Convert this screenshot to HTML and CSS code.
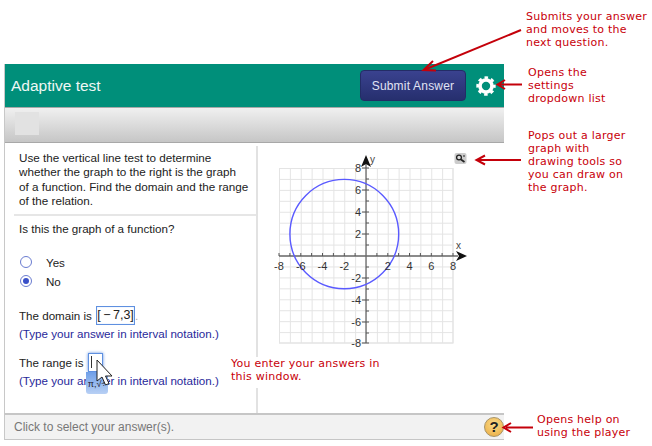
FILE: index.html
```html
<!DOCTYPE html>
<html lang="en">
<head>
<meta charset="utf-8">
<title>Adaptive test</title>
<link rel="stylesheet" href="styles.css">
</head>
<body>
<div class="page">
  <main class="player">
    <header class="topbar">
      <h1 class="title">Adaptive test</h1>
      <button class="submit">Submit Answer</button>
      <svg class="gear" width="20" height="20" viewBox="0 0 20 20">
        <circle cx="10" cy="10" r="6" fill="none" stroke="#fff" stroke-width="3.6"/>
        <circle cx="10" cy="10" r="8.2" fill="none" stroke="#fff" stroke-width="3" stroke-dasharray="3.44 3" stroke-dashoffset="1.7"/>
      </svg>
    </header>
    <div class="toolbar"><span class="toolbar-blank"></span></div>
    <section class="content">
      <div class="question">
        <p class="prompt">Use the vertical line test to determine<br>whether the graph to the right is the graph<br>of a function. Find the domain and the range<br>of the relation.</p>
        <div class="answers">
          <p class="ask">Is this the graph of a function?</p>
          <div class="options">
            <div class="option"><span class="radio"></span>Yes</div>
            <div class="option"><span class="radio checked"></span>No</div>
          </div>
          <div class="field first">
            <p class="field-line">The domain is <span class="box">[&#8201;&#8722;&#8201;7,3]</span><span class="dot">.</span></p>
            <p class="hint">(Type your answer in interval notation.)</p>
          </div>
          <div class="field">
            <p class="field-line">The range is <span class="box active"><i class="caret"></i></span></p>
            <p class="hint">(Type your answer in interval notation.)</p>
          </div>
        </div>
      </div>
      <div class="graph-pane">
        <svg class="graph" width="246" height="264" viewBox="258 146 246 264">
          <defs>
            <pattern id="cells" x="279" y="168" width="10.875" height="10.94" patternUnits="userSpaceOnUse">
              <path d="M0 0H10.875M0 0V10.94" fill="none" stroke="#e4e4e4" stroke-width="2"/>
            </pattern>
          </defs>
          <rect x="279" y="168" width="174" height="175" fill="url(#cells)"/>
          <path d="M279 343H453.5M453 168V343" fill="none" stroke="#e4e4e4" stroke-width="1.5"/>
          <path d="M279 256H458M366 343V160" fill="none" stroke="#6a6a6a" stroke-width="1.3"/>
          <path d="M279 253V256M289.9 253V256M300.8 253V256M311.6 253V256M322.5 253V256M333.4 253V256M344.3 253V256M355.1 253V256M376.9 253V256M387.8 253V256M398.6 253V256M409.5 253V256M420.4 253V256M431.3 253V256M442.1 253V256M453 253V256" stroke="#555" fill="none"/>
          <path d="M366 168H369M366 179H369M366 190H369M366 201H369M366 212H369M366 223H369M366 234H369M366 245H369M366 267H369M366 278H369M366 289H369M366 300H369M366 311H369M366 322H369M366 333H369M366 343H369" stroke="#555" fill="none"/>
          <path d="M362 168H366M362 190H366M362 212H366M362 234H366M362 278H366M362 300H366M362 322H366M362 343H366" stroke="#555" fill="none"/>
          <path d="M366 155L361 167L366 164L371 167Z" fill="#111"/>
          <path d="M467 256L456 251L459 256L456 261Z" fill="#111"/>
          <ellipse cx="344.3" cy="234.1" rx="54.4" ry="54.7" fill="none" stroke="#5a5aff" stroke-width="1.4"/>
          <g class="axis-num">
            <text x="279" y="270">-8</text><text x="300.8" y="270">-6</text><text x="322.5" y="270">-4</text><text x="344.3" y="270">-2</text>
            <text x="387.8" y="270">2</text><text x="409.5" y="270">4</text><text x="431.3" y="270">6</text><text x="453" y="270">8</text>
          </g>
          <g class="axis-num end">
            <text x="361" y="172">8</text><text x="361" y="194">6</text><text x="361" y="216">4</text><text x="361" y="238">2</text>
            <text x="361" y="282">-2</text><text x="361" y="304">-4</text><text x="361" y="326">-6</text><text x="361" y="347">-8</text>
          </g>
          <text class="axis-letter" x="370" y="163">y</text>
          <text class="axis-letter" x="456" y="249">x</text>
          <rect x="454.5" y="153" width="12" height="11" rx="2" fill="#ccc"/>
          <circle cx="459" cy="157.5" r="2.4" fill="#ddd" stroke="#222" stroke-width="1.3"/>
          <path d="M461 159.5L464.5 162" stroke="#222" stroke-width="1.7"/>
          <path d="M463 156H465" stroke="#222"/>
        </svg>
      </div>
    </section>
    <footer class="statusbar">
      <span class="status">Click to select your answer(s).</span>
      <span class="help">?</span>
    </footer>
  </main>

  <div class="palette">&#960;,&#8730;&#247;</div>
  <svg class="overlay" width="652" height="446" viewBox="0 0 652 446">
    <path d="M97 360V381L102 377L105.500 385L109 383.500L105.500 376L112 376Z" fill="#fff" stroke="#222"/>
    <g fill="none" stroke="#c4000a" stroke-width="2">
      <path d="M521 30L425 69.500"/>
      <path d="M433 61L423.500 70L436 70.500"/>
      <path d="M522 84.500H498M505 80L497.500 84.500L505 89"/>
      <path d="M521 160H478M485 155.500L476.500 160L485 164.500"/>
      <path d="M533 427.500H506M511 423L503.500 427.500L511 432"/>
    </g>
  </svg>
  <p class="note note-submit">Submits your answer<br>and moves to the<br>next question.</p>
  <p class="note note-gear">Opens the<br>settings<br>dropdown list</p>
  <p class="note note-graph">Pops out a larger<br>graph with<br>drawing tools so<br>you can draw on<br>the graph.</p>
  <p class="note note-enter">You enter your answers in<br>this window.</p>
  <p class="note note-help">Opens help on<br>using the player</p>
</div>
</body>
</html>
```
FILE: styles.css
```css
* { box-sizing: border-box; }
html, body { margin: 0; padding: 0; background: #fff; }
body { font-family: "Liberation Sans", Arial, sans-serif; color: #222; overflow: hidden; }
p, h1 { margin: 0; }

.page { position: relative; width: 652px; height: 446px; padding: 64px 0 0 4px; }

.player { width: 500px; height: 376px; border-left: 1px solid #c8c8c8; display: flex; flex-direction: column; }

.topbar { height: 43px; background: #008f7a; display: flex; align-items: center; padding: 0 8px 0 6px; flex: none; }
.title { font-size: 15.500px; font-weight: normal; color: #eef7f5; flex: 1; }
.submit { width: 106px; height: 31px; border: 1px solid #232c66; border-radius: 4px; background: linear-gradient(#3a428f, #262f6e); color: #e0e3f5; font: 12px "Liberation Sans", Arial, sans-serif; letter-spacing: .2px; padding: 0; }
.gear { margin-left: 10px; flex: none; }

.toolbar { height: 36px; flex: none; background: linear-gradient(#f0f0f0, #c6c6c6); border-top: 1px solid #a8a8a8; border-bottom: 1px solid #a8a8a8; padding: 4px 0 0 10px; }
.toolbar-blank { display: block; width: 24px; height: 23px; background: #e2e2e2; }

.content { flex: 1; display: flex; min-height: 0; padding-top: 3px; }
.question { width: 253px; flex: none; border-right: 2px solid #e2e2e2; display: flex; flex-direction: column; }
.prompt { font-size: 11.700px; line-height: 14.300px; padding: 5px 0 0 14px; height: 68px; color: #222; white-space: nowrap; }
.answers { margin-left: 9px; border-top: 2px solid #e6e6e6; padding: 6px 0 0 5px; font-size: 11.600px; }
.ask { line-height: 14px; }
.options { margin-top: 19px; display: flex; flex-direction: column; gap: 5px; }
.option { display: flex; align-items: center; height: 14px; gap: 14px; }
.radio { width: 12px; height: 12px; border-radius: 50%; border: 1px solid #6a7cd0; background: #fff; position: relative; margin-left: 1px; }
.radio.checked::after { content: ""; position: absolute; inset: 2px; border-radius: 50%; background: #3a50c8; }
.field { margin-top: 12px; }
.field.first { margin-top: 18px; }
.field-line { display: flex; align-items: center; height: 19px; white-space: pre; }
.box { display: block; width: 39px; height: 19px; line-height: 17px; text-align: center; border: 1px solid #5f90e0; box-shadow: inset 0 0 1px #8fb4ee; margin-left: 1px; font-size: 12.500px; }
.box.active { width: 15px; margin-left: 1px; box-shadow: 0 0 3px #5f8fe0; position: relative; }
.caret { position: absolute; left: 2px; top: 2px; width: 1px; height: 12px; background: #333; }
.dot { color: #aaa; }
.hint { color: #28289a; line-height: 14px; margin-top: 2px; }

.graph-pane { flex: 1; min-width: 0; }
.graph { display: block; }
.axis-num text { font: 11px "Liberation Sans", Arial, sans-serif; fill: #333; text-anchor: middle; }
.axis-num.end text { text-anchor: end; }
.axis-letter { font: 10px "Liberation Sans", Arial, sans-serif; fill: #444; }

.statusbar { height: 27px; flex: none; background: #f2f2f2; border-top: 2px solid #c6c6c6; border-bottom: 1px solid #c6c6c6; display: flex; align-items: center; padding-left: 9px; }
.status { flex: 1; color: #777; font-size: 12px; }
.help { width: 20px; height: 20px; margin-right: 0; border-radius: 50%; background: radial-gradient(circle at 50% 35%, #fbdc8a, #e9a93e); border: 1px solid #a89468; text-align: center; font: bold 15px/18px "Liberation Sans", Arial, sans-serif; color: #222; }

.overlay { position: absolute; left: 0; top: 0; pointer-events: none; }
.palette { position: absolute; left: 86px; top: 372px; width: 22px; height: 22px; border-radius: 0 0 3px 3px; background: linear-gradient(#6f9fe8, #b8d0f4); color: #223; font: 9px/24px "Liberation Sans", Arial, sans-serif; text-align: center; }
.note { position: absolute; font: 11px/13px "DejaVu Sans", Verdana, sans-serif; letter-spacing: .25px; color: #c8000a; white-space: nowrap; }
.note-submit { left: 526px; top: 10px; }
.note-gear { left: 528px; top: 66px; }
.note-graph { left: 528px; top: 129px; }
.note-enter { left: 231px; top: 357px; background: #fff; padding-bottom: 5px; }
.note-help { left: 537px; top: 413px; }
```
